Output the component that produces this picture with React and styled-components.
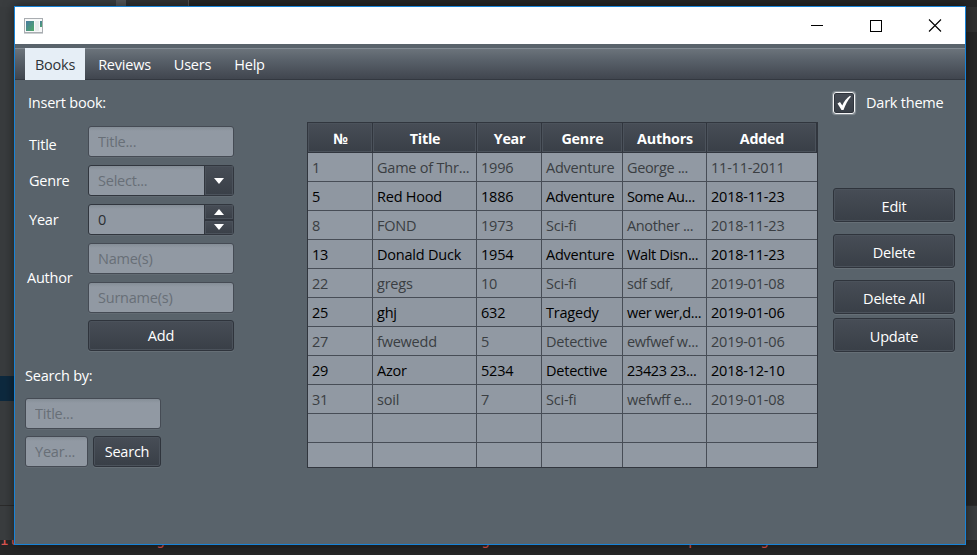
import React from "react";
import styled, { createGlobalStyle, css } from "styled-components";

const Global = createGlobalStyle`
  * { box-sizing: border-box; }
  body { margin: 0; background: #262626; overflow: hidden; }
  button, input { font: inherit; letter-spacing: inherit; }
`;

const Desktop = styled.div`
  position: relative;
  width: 977px;
  height: 555px;
  overflow: hidden;
  background: #262626;
  padding: 6px 11px 10px 14px;
  font: 14.5px/20px "Open Sans", "Noto Sans", sans-serif;
  letter-spacing: -0.22px;
  color: #fff;
`;

const Backdrop = styled.div`
  position: absolute;
  inset: 0;
  display: grid;
  grid-template-rows: 7px 369px 25px 104px 35px 15px;
`;
const Strip = styled.div`
  display: flex;
  justify-content: space-between;
  background: ${(p) => p.$bg || "transparent"};
  ${(p) => p.$line && css`border-top: 1px solid #2b2b2b;`}
`;
const Block = styled.div`
  width: ${(p) => p.$w}px;
  height: ${(p) => (p.$h ? p.$h + "px" : "auto")};
  background: ${(p) => p.$bg};
`;
const TopTabs = styled.div`display: flex;`;
const LogLine = styled.div`
  height: 15px;
  display: flex;
  color: #d9534f;
  font: 15px/0 "DejaVu Sans Mono", monospace;
  white-space: pre;
  overflow: hidden;
`;
const LogBit = styled.span`
  width: ${(p) => p.$w}px;
  flex: none;
`;

const Window = styled.div`
  position: relative;
  width: 952px;
  height: 539px;
  border: 1px solid #1883d7;
  background: #59636b;
  box-shadow: 0 0 10px rgba(0, 0, 0, 0.5);
`;
const TitleBar = styled.div`
  height: 37px;
  background: #fff;
  display: flex;
  align-items: center;
  justify-content: space-between;
  padding: 0 23px 0 9px;
`;
const WinButtons = styled.div`
  display: flex;
  gap: 45px;
  height: 16px;
`;
const MenuBar = styled.div`
  margin-top: 4px;
  height: 32px;
  display: flex;
  padding-left: 10px;
  background: linear-gradient(#6d757c, #5a626b 35%, #3f444d);
  box-shadow: inset 0 1px #828b93, inset 0 -1px #333840;
`;
const MenuItem = styled.div`
  width: ${(p) => p.$w}px;
  text-align: center;
  line-height: 33px;
  ${(p) => p.$active && css`background: #e6eef6; color: #2e3338;`}
`;

const Content = styled.div`display: flex;`;
const Left = styled.div`
  width: 292px;
  padding: 13px 0 0 10px;
`;
const Heading = styled.div`
  height: 21px;
  padding-left: ${(p) => p.$indent || 0}px;
`;
const SearchHeading = styled(Heading)`
  margin: 15px 0 11px;
`;
const Form = styled.div`
  margin-top: 12px;
  display: grid;
  grid-template-columns: 63px 146px;
  row-gap: 8px;
`;
const Label = styled.label`
  height: 31px;
  padding-left: ${(p) => p.$indent || 4}px;
  padding-top: ${(p) => p.$top || 6}px;
`;
const Stack = styled.div`
  display: flex;
  flex-direction: column;
  gap: 8px;
`;
const fieldLook = css`
  height: 31px;
  border: 1px solid #454b54;
  border-radius: 3px;
  background: linear-gradient(#858e97, #9199a3 4px);
  box-shadow: 0 1px rgba(255, 255, 255, 0.05);
`;
const Input = styled.input`
  ${fieldLook}
  width: ${(p) => p.$w || 146}px;
  padding: 0 9px;
  color: #2b2f33;
  outline: none;
  &::placeholder { color: #686f77; opacity: 1; }
`;
const buttonLook = css`
  background: linear-gradient(#474d56, #393f47);
  box-shadow: inset 0 0 0 1px #4b525b;
`;
const Combo = styled.div`
  ${fieldLook}
  border-color: #31363e;
  width: 146px;
  display: flex;
  overflow: hidden;
`;
const ComboText = styled.div`
  flex: 1;
  padding: 5px 9px 0;
  color: ${(p) => (p.$filled ? "#2b2f33" : "#686f77")};
`;
const ArrowBox = styled.div`
  ${buttonLook}
  width: 29px;
  flex: 1 1 0;
  border-left: 1px solid #31363e;
  display: flex;
  align-items: center;
  justify-content: center;
  & + & { border-top: 2px solid #31363e; }
`;
const ArrowColumn = styled.div`
  display: flex;
  flex-direction: column;
  width: 29px;
`;
const Button = styled.button`
  ${buttonLook}
  width: ${(p) => p.$w}px;
  height: ${(p) => p.$h || 31}px;
  margin: ${(p) => p.$mt || 0}px 0 0 ${(p) => p.$ml || 0}px;
  padding: ${(p) => (p.$h ? 3 : 0)}px 0 0;
  border: 1px solid #2f343c;
  border-radius: 3px;
  color: #fff;
  box-shadow: inset 0 0 0 1px #4b525b, 0 1px rgba(255, 255, 255, 0.08);
`;
const SearchRow = styled.div`
  display: flex;
  gap: 5px;
  margin-top: 7px;
`;

const Table = styled.div`
  margin-top: 42px;
  width: 511px;
  height: 346px;
  border: 1px solid #31363e;
  background: #9199a3;
  overflow: hidden;
`;
const Row = styled.div`
  display: grid;
  grid-template-columns: 65px 104px 65px 81px 84px 110px;
  height: ${(p) => p.$h || 29}px;
  color: ${(p) => (p.$odd ? "#000" : "#3a3e42")};
  background: ${(p) => (p.$odd ? "#8f97a1" : "#9199a3")};
`;
const Cell = styled.div`
  border-right: 1px solid #474d56;
  border-bottom: 1px solid #474d56;
  padding: 5px 2px 0 4px;
  white-space: nowrap;
  overflow: hidden;
  &:nth-child(5) { letter-spacing: -0.35px; }
  &:last-child { border-right: 0; }
`;
const HeadCell = styled.div`
  ${buttonLook}
  border-right: 1px solid #31363e;
  border-bottom: 1px solid #31363e;
  color: #fff;
  font-weight: 700;
  font-size: 14.3px;
  text-align: center;
  padding: 6px 0 0 1px;
`;

const Side = styled.div`
  margin-left: 15px;
  padding-top: 11px;
  width: 122px;
`;
const CheckRow = styled.div`
  display: flex;
  align-items: center;
  gap: 11px;
  height: 24px;
  margin-bottom: 73px;
  white-space: nowrap;
`;
const CheckBox = styled.div`
  width: 22px;
  height: 22px;
  flex: none;
  border: 1px solid #f4f5f6;
  border-radius: 3px;
  background: linear-gradient(#474d56, #393f47);
  box-shadow: 0 0 1px 0.5px rgba(230, 235, 238, 0.35), inset 0 0 0 1px #2f343c;
  display: flex;
  align-items: center;
  justify-content: center;
`;

const Down = () => (
  <svg width="10" height="6" viewBox="0 0 10 6"><path d="M0 0H10L5 6Z" fill="#fff" /></svg>
);
const Up = () => (
  <svg width="10" height="6" viewBox="0 0 10 6"><path d="M0 6H10L5 0Z" fill="#fff" /></svg>
);
const AppIcon = () => (
  <svg width="19" height="17" viewBox="0 0 19 17">
    <defs>
      <linearGradient id="pane" x1="0" y1="0" x2="1" y2="1">
        <stop offset="0" stopColor="#477aa0" />
        <stop offset="1" stopColor="#4fa866" />
      </linearGradient>
    </defs>
    <path d="M0 1H19V16H0Z" fill="#a9adb1" />
    <path d="M1 2H18V15H1Z" fill="#f7f8f8" />
    <path d="M2 4H10V14H2Z" fill="url(#pane)" />
    <path d="M11 4H15V14H11Z" fill="#e8ebec" />
    <path d="M16 4H18V10H16Z" fill="url(#pane)" />
    <path d="M0 16H19V17H0Z" fill="#ccd0d2" />
  </svg>
);

const books = [
  ["1", "Game of Thr...", "1996", "Adventure", "George ...", "11-11-2011"],
  ["5", "Red Hood", "1886", "Adventure", "Some Au...", "2018-11-23"],
  ["8", "FOND", "1973", "Sci-fi", "Another ...", "2018-11-23"],
  ["13", "Donald Duck", "1954", "Adventure", "Walt Disn...", "2018-11-23"],
  ["22", "gregs", "10", "Sci-fi", "sdf sdf,", "2019-01-08"],
  ["25", "ghj", "632", "Tragedy", "wer wer,d...", "2019-01-06"],
  ["27", "fwewedd", "5", "Detective", "ewfwef w...", "2019-01-06"],
  ["29", "Azor", "5234", "Detective", "23423 23...", "2018-12-10"],
  ["31", "soil", "7", "Sci-fi", "wefwff e...", "2019-01-08"],
  ["", "", "", "", "", ""],
  ["", "", "", "", "", ""],
];
const columns = ["№", "Title", "Year", "Genre", "Authors", "Added"];

export default function App() {
  return (
    <Desktop>
      <Global />
      <Backdrop>
        <Strip>
          <TopTabs>
            <Block $w={116} $bg="#3a3d3f" />
            <Block $w={10} $bg="#545658" />
            <Block $w={62} $bg="#303233" />
            <Block $w={1} $bg="#505254" />
          </TopTabs>
        </Strip>
        <Strip><Block $w={14} $bg="#393c3e" /><Block $w={11} $h={25} $bg="#303030" /></Strip>
        <Strip><Block $w={14} $bg="#0d293e" /></Strip>
        <Strip><Block $w={14} $bg="#393c3e" /></Strip>
        <Strip $bg="#3a3d3f" $line />
        <LogLine>
          <LogBit $w={156}>It</LogBit>
          <LogBit $w={325}>g</LogBit>
          <LogBit $w={207}>g</LogBit>
          <LogBit $w={72}>p</LogBit>
          <LogBit $w={20}>g</LogBit>
        </LogLine>
      </Backdrop>
      <Window>
        <TitleBar>
          <AppIcon />
          <WinButtons>
            <svg width="14" height="14"><path d="M1 7.500H13" stroke="#000" /></svg>
            <svg width="14" height="14"><path d="M1.500 2.500H12.500V13.500H1.500Z" fill="none" stroke="#000" transform="translate(0 -.5)" shapeRendering="crispEdges" /></svg>
            <svg width="14" height="14"><path d="M1 1.500L13 13.500M13 1.500L1 13.500" stroke="#000" strokeWidth="1.1" /></svg>
          </WinButtons>
        </TitleBar>
        <MenuBar>
          <MenuItem $w={60} $active>Books</MenuItem>
          <MenuItem $w={79}>Reviews</MenuItem>
          <MenuItem $w={57}>Users</MenuItem>
          <MenuItem $w={57}>Help</MenuItem>
        </MenuBar>
        <Content>
          <Left>
            <Heading $indent={3}>Insert book:</Heading>
            <Form>
              <Label $top={9}>Title</Label>
              <Input placeholder="Title..." />
              <Label>Genre</Label>
              <Combo>
                <ComboText>Select...</ComboText>
                <ArrowColumn><ArrowBox><Down /></ArrowBox></ArrowColumn>
              </Combo>
              <Label>Year</Label>
              <Combo>
                <ComboText $filled>0</ComboText>
                <ArrowColumn>
                  <ArrowBox><Up /></ArrowBox>
                  <ArrowBox><Down /></ArrowBox>
                </ArrowColumn>
              </Combo>
              <Label $indent={2} $top={25}>Author</Label>
              <Stack>
                <Input placeholder="Name(s)" />
                <Input placeholder="Surname(s)" />
              </Stack>
            </Form>
            <Button $w={146} $ml={63} $mt={7}>Add</Button>
            <SearchHeading>Search by:</SearchHeading>
            <Input $w={136} placeholder="Title..." />
            <SearchRow>
              <Input $w={63} placeholder="Year..." />
              <Button $w={68}>Search</Button>
            </SearchRow>
          </Left>
          <Table>
            <Row $h={30}>
              {columns.map((c) => <HeadCell key={c}>{c}</HeadCell>)}
            </Row>
            {books.map((b, i) => (
              <Row key={i} $odd={i % 2 === 1}>
                {b.map((t, j) => <Cell key={j}>{t}</Cell>)}
              </Row>
            ))}
          </Table>
          <Side>
            <CheckRow>
              <CheckBox>
                <svg width="16" height="16" viewBox="0 0 16 16">
                  <path d="M1.5 8.5L4 7L6.3 10.5C8 6.500 10.500 3 14 .8L15 1.500C11.500 5.500 9.500 9.500 7.500 15H5.500Z" fill="#fff" />
                </svg>
              </CheckBox>
              Dark theme
            </CheckRow>
            <Button $w={122} $h={34}>Edit</Button>
            <Button $w={122} $h={34} $mt={12}>Delete</Button>
            <Button $w={122} $h={34} $mt={12}>Delete All</Button>
            <Button $w={122} $h={34} $mt={4}>Update</Button>
          </Side>
        </Content>
      </Window>
    </Desktop>
  );
}
